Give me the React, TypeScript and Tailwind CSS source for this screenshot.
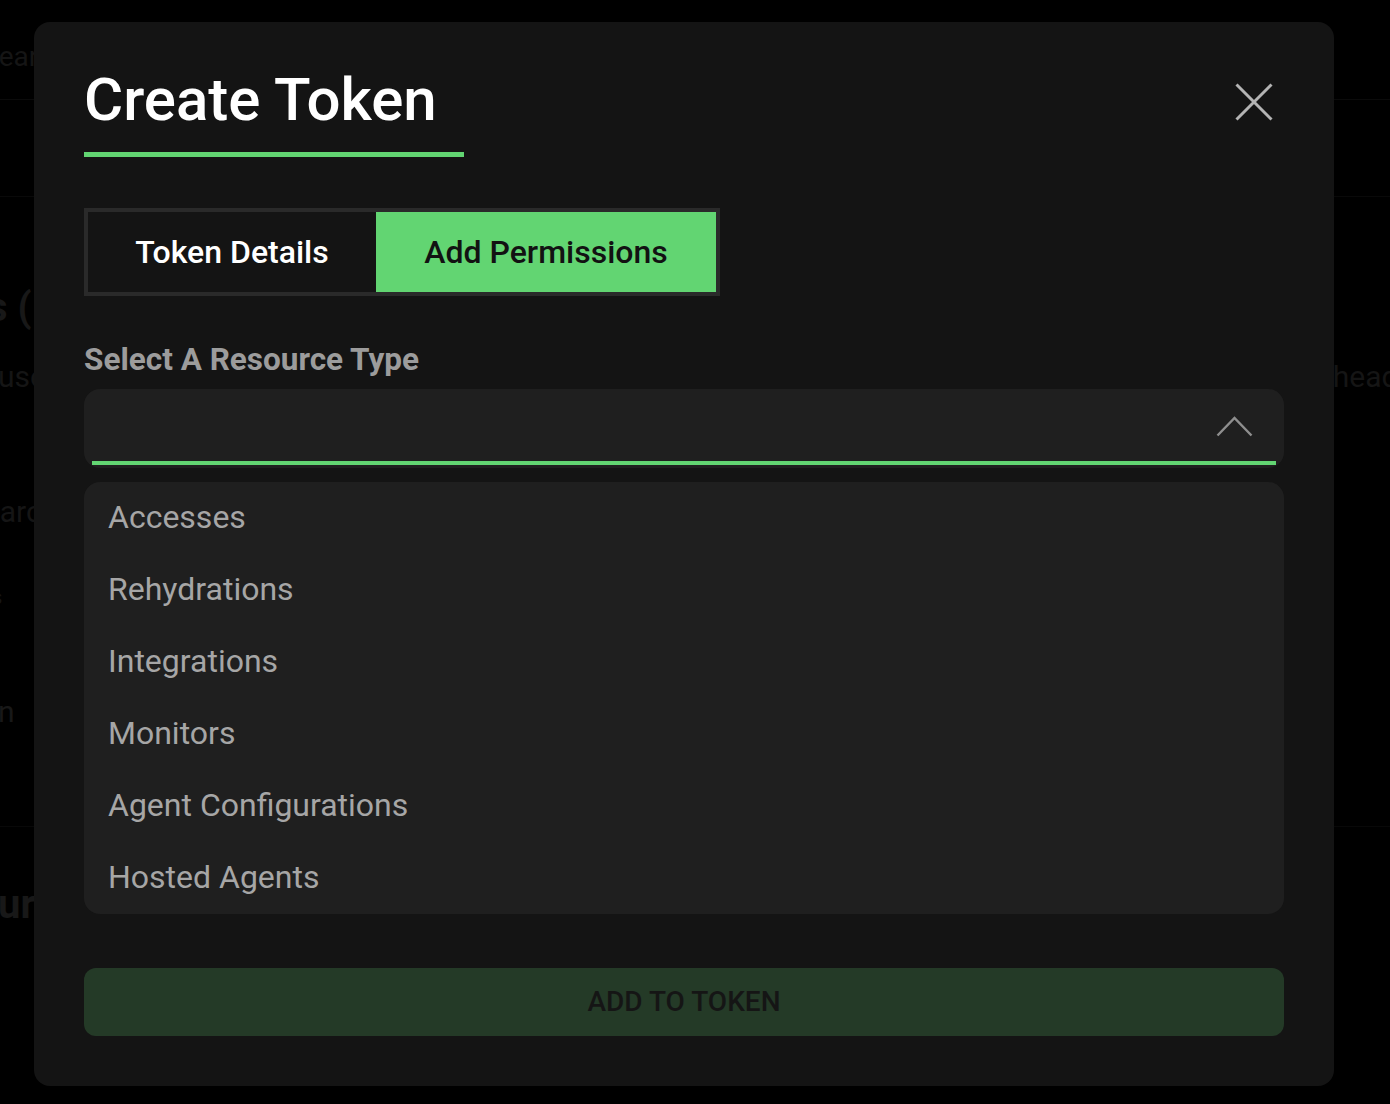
const RESOURCE_TYPES: string[] = [
  'Accesses',
  'Rehydrations',
  'Integrations',
  'Monitors',
  'Agent Configurations',
  'Hosted Agents',
];

const CLASS_NAMES: Record<string, string> = {
  page: 'relative h-[1104px] w-[1390px] overflow-hidden bg-black font-["Roboto",sans-serif]',
  ghost: 'whitespace-nowrap leading-none text-[#151515]',
  modal:
    'absolute left-[34px] top-[22px] flex h-[1064px] w-[1300px] flex-col rounded-[16px] bg-[#141414] px-[50px] pt-[48px]',
  tabs: 'mt-[51px] flex w-[636px] border-[4px] border-[#2a2a2a]',
  tab: 'flex h-[80px] items-center justify-center text-[32px] font-medium leading-none',
  option: 'flex h-[72px] items-center px-[24px] text-[32px] text-[#a6a6a6]',
};

// faint page behind the dialog
const BackgroundPage = (): React.JSX.Element => (
  <div className="flex flex-col">
    <div className="flex h-[100px] items-end border-b border-[#0b0b0b] pb-[28px]">
      <span className={`${CLASS_NAMES.ghost} -ml-[18px] text-[28px]`}>Search</span>
    </div>
    <div className="h-[97px] border-b border-[#090909]" />
    <div className="flex h-[135px] items-end pb-[4px]">
      <span className={`${CLASS_NAMES.ghost} -ml-[122px] text-[40px] font-bold text-[#181818]`}>
        Tokens (
      </span>
    </div>
    <div className="flex h-[64px] items-end justify-between pb-[4px]">
      <span className={`${CLASS_NAMES.ghost} -ml-[2px] text-[30px]`}>used</span>
      <span className={`${CLASS_NAMES.ghost} -mr-[50px] text-[30px]`}>headers</span>
    </div>
    <div className="flex h-[135px] items-end pb-[4px]">
      <span className={`${CLASS_NAMES.ghost} -ml-[34px] text-[30px]`}>Search</span>
    </div>
    <div className="flex h-[80px] items-end pb-[4px]">
      <span className={`${CLASS_NAMES.ghost} -ml-[8px] text-[20px]`}>s</span>
    </div>
    <div className="flex h-[120px] items-end pb-[4px]">
      <span className={`${CLASS_NAMES.ghost} -ml-[2px] text-[30px] text-[#181818]`}>n</span>
    </div>
    <div className="h-[96px] border-b border-[#080808]" />
    <div className="flex h-[102px] items-end pb-[4px]">
      <span className={`${CLASS_NAMES.ghost} -ml-[48px] text-[40px] font-bold text-[#181818]`}>
        Your
      </span>
    </div>
  </div>
);

export default function App(): React.JSX.Element {
  return (
    <div className={CLASS_NAMES.page}>
      <BackgroundPage />

      <div className={CLASS_NAMES.modal}>
        <div className="flex items-start justify-between">
          <div className="flex flex-col">
            <h1 className="text-[60px] font-medium leading-[60px] text-white">Create Token</h1>
            <div className="mt-[22px] h-[5px] w-[380px] bg-[#62d572]" />
          </div>
          <button className="mr-[11px] mt-[13px]" aria-label="Close">
            <svg width="38" height="38" viewBox="0 0 38 38" fill="none">
              <path d="M1.5 1.5L36.5 36.5M36.5 1.5L1.5 36.5" stroke="#b4b4b4" strokeWidth="3" />
            </svg>
          </button>
        </div>

        <div className={CLASS_NAMES.tabs}>
          <div className={`${CLASS_NAMES.tab} w-[288px] bg-[#141414] text-white`}>Token Details</div>
          <div className={`${CLASS_NAMES.tab} w-[340px] bg-[#62d572] text-[#121212]`}>
            Add Permissions
          </div>
        </div>

        <label className="mt-[46px] text-[31.5px] font-bold leading-[36px] text-[#9c9c9c]">
          Select A Resource Type
        </label>

        <div className="mt-[11px] flex h-[79px] flex-col rounded-[16px] bg-[#1f1f1f] px-[8px]">
          <div className="flex flex-1 items-center justify-end pr-[23px] pt-[2px]">
            <svg width="37" height="21" viewBox="0 0 37 21" fill="none">
              <path d="M1.5 19.5L18.5 2L35.5 19.5" stroke="#8e8e8e" strokeWidth="2.4" />
            </svg>
          </div>
          <div className="mb-[3px] h-[4px] bg-[#62d572]" />
        </div>

        <ul className="mt-[14px] flex flex-col rounded-[16px] bg-[#1f1f1f]">
          {RESOURCE_TYPES.map(
            (name: string): React.JSX.Element => (
              <li key={name} className={CLASS_NAMES.option}>
                <span className="-mt-[3px]">{name}</span>
              </li>
            )
          )}
        </ul>

        <button className="mt-[54px] flex h-[68px] items-center justify-center rounded-[12px] bg-[#243a27] text-[28px] font-medium text-[#151515]">
          ADD TO TOKEN
        </button>
      </div>
    </div>
  );
}
